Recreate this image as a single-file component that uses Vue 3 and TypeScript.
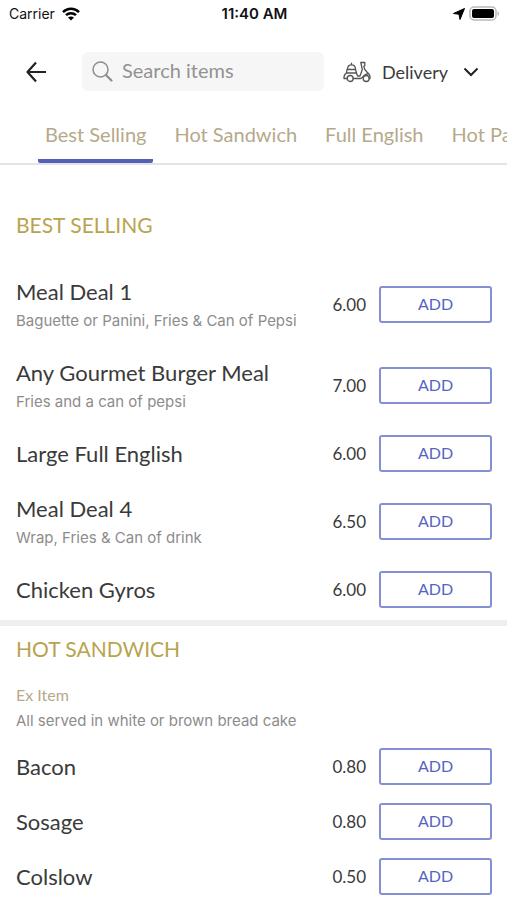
<script setup lang="ts">
import { ref } from 'vue'

interface MenuItem {
  name: string
  price: string
  description?: string
}

interface MenuSection {
  title: string
  noteTitle?: string
  note?: string
  items: MenuItem[]
}

const tabs: string[] = ['Best Selling', 'Hot Sandwich', 'Full English', 'Hot Panini']
const activeTab = ref<string>(tabs[0])
const search = ref<string>('')

const sections: MenuSection[] = [
  {
    title: 'BEST SELLING',
    items: [
      { name: 'Meal Deal 1', price: '6.00', description: 'Baguette or Panini, Fries & Can of Pepsi' },
      { name: 'Any Gourmet Burger Meal', price: '7.00', description: 'Fries and a can of pepsi' },
      { name: 'Large Full English', price: '6.00' },
      { name: 'Meal Deal 4', price: '6.50', description: 'Wrap, Fries & Can of drink' },
      { name: 'Chicken Gyros', price: '6.00' },
    ],
  },
  {
    title: 'HOT SANDWICH',
    noteTitle: 'Ex Item',
    note: 'All served in white or brown bread cake',
    items: [
      { name: 'Bacon', price: '0.80' },
      { name: 'Sosage', price: '0.80' },
      { name: 'Colslow', price: '0.50' },
    ],
  },
]
</script>

<template>
  <div class="screen">
    <div class="status">
      <div class="status-left">
        <span>Carrier</span>
        <svg width="20" height="14" viewBox="0 0 18 14" fill="none" stroke="#000" stroke-width="2.5" aria-hidden="true">
          <path d="M1 5.2C5.5 .7 12.500 .7 17 5.200" />
          <path d="M4 8.200C6.800 5.500 11.200 5.500 14 8.200" />
          <path d="M9 13.600 6 10.600C7.700 9 10.300 9 12 10.600Z" fill="#000" stroke="none" />
        </svg>
      </div>
      <span class="clock">11:40 AM</span>
      <div class="status-right">
        <svg width="12" height="12" viewBox="0 0 12 12" aria-hidden="true">
          <path d="M11.500 .5 7 11.500 6 6.200.5 5.500Z" fill="#000" stroke="#000" stroke-linejoin="round" />
        </svg>
        <svg width="31" height="15" viewBox="0 0 31 15" aria-hidden="true">
          <rect x="1" y="1" width="26" height="13" rx="4" fill="#fff" stroke="#b9b9b9" stroke-width="1.500" />
          <rect x="3" y="3" width="22" height="9" rx="2" fill="#000" />
          <path d="M28.500 5.200C30.600 5.800 30.600 9.200 28.500 9.800Z" fill="#b9b9b9" />
        </svg>
      </div>
    </div>

    <header class="toolbar">
      <button class="back" type="button" aria-label="Back">
        <svg width="22" height="22" viewBox="0 0 22 22" fill="none" stroke="#222" stroke-width="2.200" stroke-linejoin="round">
          <path d="M20 11H2M10 1.500 1.500 11l8.500 9.500" />
        </svg>
      </button>
      <label class="search">
        <svg width="21" height="21" viewBox="0 0 21 21" fill="none" stroke="#8e8e8e" stroke-width="1.500" aria-hidden="true">
          <circle cx="8.500" cy="8.500" r="7.500" />
          <path d="m14 14 5.500 5.500" stroke-width="2.200" stroke-linecap="round" />
        </svg>
        <input v-model="search" type="text" placeholder="Search items" aria-label="Search items" />
      </label>
      <button class="mode" type="button">
        <svg width="28" height="22" viewBox="0 0 28 22" fill="none" stroke="#555" stroke-width="1.300" stroke-linejoin="round" stroke-linecap="round" aria-hidden="true">
          <path d="M4.500 8.500C4.500 2.200 12.500 2.200 12.500 8.500ZM8.500 3.700V2.200" />
          <path d="M4 8.500 3.500 12H13.500L12.500 8.500" />
          <path d="M3.500 12C1.200 13.300.8 15.200 1 17.500H4.200M10.200 17.500H17.500C19.800 17.500 19.800 13.500 25.500 12.500" />
          <path d="M13.500 12 14.500 15H17L19.300 8.500 17.800 1.500H21.800V4.500L20.800 5.500C21 9 23.500 10.500 25.500 12.500 27 14 27.300 15.500 27 17.500H26.200" />
          <circle cx="7.200" cy="17.500" r="3" />
          <circle cx="23.200" cy="17.500" r="3" />
        </svg>
        <span>Delivery</span>
        <svg class="chevron" width="16" height="10" viewBox="0 0 16 10" fill="none" stroke="#222" stroke-width="2" aria-hidden="true">
          <path d="m1.500 1.500 6.500 6.500 6.500-6.500" />
        </svg>
      </button>
    </header>

    <nav class="tabs" aria-label="Menu categories">
      <button
        v-for="tab in tabs"
        :key="tab"
        type="button"
        class="tab"
        :class="{ active: tab === activeTab }"
        @click="activeTab = tab"
      >
        {{ tab }}
      </button>
    </nav>

    <main>
      <section v-for="section in sections" :key="section.title" class="section">
        <h2>{{ section.title }}</h2>
        <div v-if="section.note" class="note">
          <h3>{{ section.noteTitle }}</h3>
          <p>{{ section.note }}</p>
        </div>
        <ul>
          <li v-for="item in section.items" :key="item.name" class="item">
            <div class="info">
              <span class="name">{{ item.name }}</span>
              <span v-if="item.description" class="description">{{ item.description }}</span>
            </div>
            <span class="price">{{ item.price }}</span>
            <button class="add" type="button" :aria-label="`ADD ${item.name}`">ADD</button>
          </li>
        </ul>
      </section>
    </main>
  </div>
</template>

<style>
body {
  margin: 0;
  background: #fff;
}
</style>

<style scoped>
.screen {
  height: 100vh;
  overflow: hidden;
  background: #fff;
  color: #3a3a3a;
  font-family: Lato, 'Liberation Sans', sans-serif;
}

button {
  padding: 0;
  border: 0;
  background: none;
  color: inherit;
  font: inherit;
  cursor: pointer;
}

.status {
  display: grid;
  grid-template-columns: 1fr auto 1fr;
  align-items: center;
  height: 27px;
  padding: 0 7px 0 9px;
  color: #111;
  font-family: Inter, sans-serif;
  font-size: 14px;
}

.status-left,
.status-right {
  display: flex;
  align-items: center;
  gap: 6px;
}

.status-right {
  justify-content: flex-end;
  gap: 4px;
}

.clock {
  font-size: 15px;
  font-weight: 600;
}

.toolbar {
  display: flex;
  align-items: center;
  height: 89px;
  padding: 0 28px 0 26px;
}

.toolbar svg {
  display: block;
  flex: none;
}

.search {
  display: flex;
  flex: 1;
  align-items: center;
  gap: 9px;
  min-width: 0;
  height: 39px;
  margin: 0 19px 0 34px;
  padding: 0 10px;
  box-sizing: border-box;
  border-radius: 6px;
  background: #f6f6f6;
}

.search input {
  flex: 1;
  min-width: 0;
  padding: 0 0 3px;
  border: 0;
  outline: 0;
  background: none;
  color: #333;
  font: inherit;
  font-size: 20px;
}

.search input::placeholder {
  color: #929292;
  opacity: 1;
}

.mode {
  display: flex;
  align-items: center;
  gap: 11px;
  font-size: 18px;
}

.chevron {
  margin-left: 4px;
}

.tabs {
  display: flex;
  gap: 14px;
  height: 47px;
  padding-left: 38px;
  overflow: hidden;
  border-bottom: 2px solid #e3e3e3;
}

.tab {
  flex: none;
  box-sizing: border-box;
  padding: 0 7px 8px;
  border-bottom: 4px solid transparent;
  border-radius: 2px;
  color: #b5a98a;
  font-size: 20px;
}

.tab.active {
  border-bottom-color: #5260b8;
}

.section {
  padding: 9px 15px 3px 16px;
}

.section:first-child {
  padding-top: 46px;
}

.section + .section {
  border-top: 6px solid #eee;
}

h2,
h3,
p,
ul {
  margin: 0;
  padding: 0;
  font-weight: 400;
}

h2 {
  color: #b8a44f;
  font-size: 21px;
  line-height: 28px;
}

.section:first-child h2 {
  margin-bottom: 25px;
}

.note {
  padding: 19px 0 5px;
}

h3 {
  color: #b5a98a;
  font-size: 16px;
  line-height: 26px;
}

p,
.description {
  color: #8c8c8c;
  font-family: Inter, sans-serif;
  font-size: 15px;
  line-height: 26px;
}

.item {
  display: flex;
  align-items: center;
  min-height: 55px;
  list-style: none;
}

.info {
  display: flex;
  flex: 1;
  flex-direction: column;
  min-width: 0;
  padding: 10px 0 9px;
}

.name {
  font-size: 22px;
  line-height: 36px;
}

.description {
  padding-bottom: 4px;
  line-height: 22px;
}

.price {
  margin: 0 13px;
  font-size: 17px;
}

.add {
  box-sizing: border-box;
  width: 113px;
  height: 37px;
  padding-bottom: 2px;
  border: 2px solid #8590d2;
  border-radius: 3px;
  color: #5563c1;
  font-size: 16px;
}
</style>
